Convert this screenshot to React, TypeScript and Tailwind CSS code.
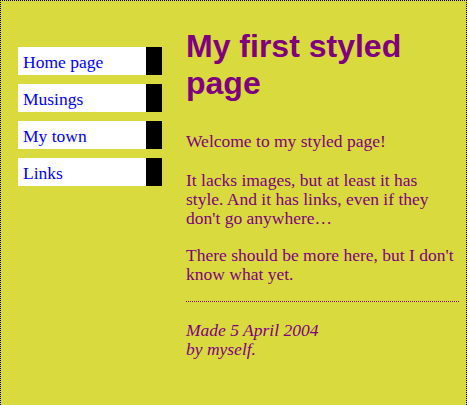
const links = ["Home page", "Musings", "My town", "Links"]

export default function App() {
  return (
    <div className="flex w-[467px] min-h-[405px] border border-b-0 border-dotted border-black bg-[#d8da3d] text-[#800080] font-['Liberation_Serif',Georgia,serif] text-[17.5px] leading-[19px]">
      <ul className="flex w-[162px] shrink-0 flex-col gap-[9px] pl-[17px] pt-[46px]">
        {links.map((label) => (
          <li key={label} className="h-[28px] w-[144px] border-r-[16px] border-black bg-white pl-[5px] pt-[6px]">
            <a href="#" className="text-[#0000ff] no-underline">
              {label}
            </a>
          </li>
        ))}
      </ul>
      <div className="ml-[23px] w-[273px] pt-[27px]">
        <h1 className="font-['Liberation_Sans',Arial,sans-serif] text-[32px] font-bold leading-[37px]">
          My first styled page
        </h1>
        <p className="mt-[30px]">Welcome to my styled page!</p>
        <p className="mt-[20px]">
          It lacks images, but at least it has style. And it has links, even if they don't go anywhere&hellip;
        </p>
        <p className="mt-[18px]">There should be more here, but I don't know what yet.</p>
        <address className="mt-[17px] border-t border-dotted border-[#800080] pt-[19px] italic">
          Made 5 April 2004
          <br />
          by myself.
        </address>
      </div>
    </div>
  )
}
